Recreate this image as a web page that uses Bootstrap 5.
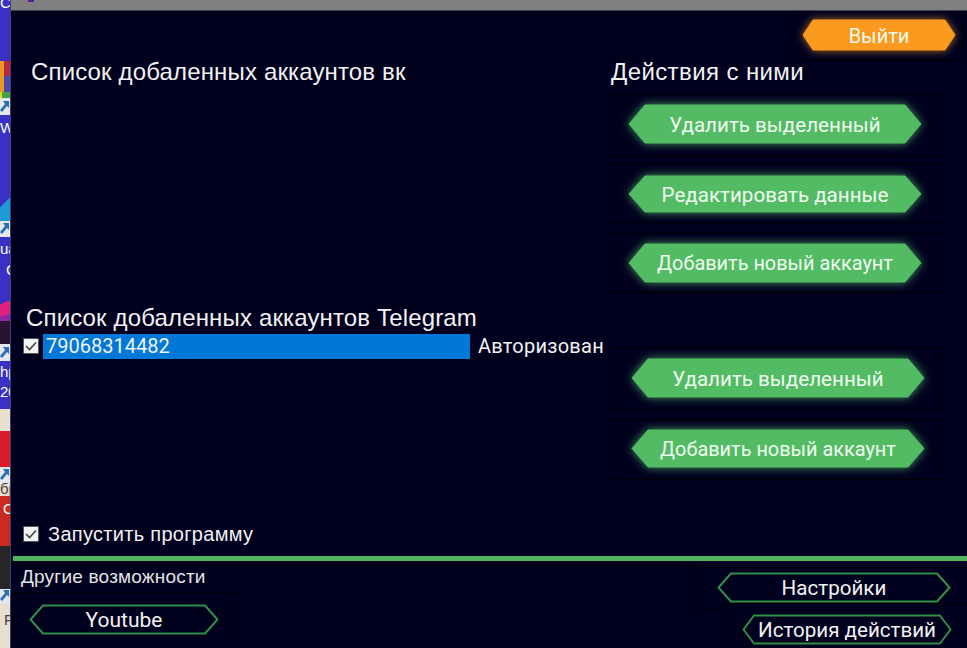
<!DOCTYPE html>
<html lang="ru">
<head>
<meta charset="utf-8">
<title>Аккаунты</title>
<link href="https://cdn.jsdelivr.net/npm/bootstrap@5.3.0/dist/css/bootstrap.min.css" rel="stylesheet">
<style>
html,body{height:648px;overflow:hidden;background:#00001e}
body{font-family:"Liberation Sans",sans-serif;color:#f2f2f2}
.desk{width:967px;height:648px}
.wall{width:11px;flex:none;overflow:hidden;font:15px/16px "Liberation Sans",sans-serif;color:#fff;border-right:1px solid #3b3d6d}
.sg{flex:none;overflow:hidden;white-space:nowrap;background:#3a30c4}
.sg span{display:block}
.sg svg{display:block}
.s-arrow{background:#e4e8ee}
.s-red{background:linear-gradient(90deg,#e89a20 0 4px,#b82840 4px)}
.s-blu{background:linear-gradient(90deg,#e89a20 0 4px,#4a48a8 4px)}
.s-grn{background:linear-gradient(90deg,#e8d820 0 2px,#3fa34d 2px)}
.s-cy{background:linear-gradient(135deg,#3a30c4 0 50%,#1f9ad6 50%)}
.s-pk{background:linear-gradient(160deg,#3a30c4 0 20%,#e0207c 20% 70%,#8a2aa0 70%)}
.s-dk{background:#2a1230}
.s-bei{background:#e8dfcf;color:#444}
.s-rd{background:#d81c2c}
.s-rd2{background:#cc2a20}
.s-blk{background:#262626}
.win{min-width:0;background:#00001e}
.tbar{height:11px;background:#808080;border-bottom:1px solid #404048;padding-left:17px}
.tico{display:block;width:6px;height:2px;background:#5a1a90}
.pane{height:637px}
.lcol{width:600px;flex:none}
.rcol{width:356px;flex:none}
.lbl{font-size:24px;line-height:26px;white-space:nowrap;letter-spacing:.15px}
.h1a{margin:48px 0 0 20px}
.h1b{margin:220px 0 0 15px}
.acc{margin:2px 0 0 12px;height:26px}
.cb{width:16px;height:16px;flex:none;background:#f3f3f3;border:1px solid #555;display:flex;align-items:center;justify-content:center}
.sel{margin-left:4px;width:427px;height:25px;background:#0078d7;font-family:Roboto,sans-serif;font-size:20px;line-height:25px;padding-left:3px}
.st{margin-left:8px;font-size:20px;letter-spacing:.25px;white-space:nowrap;font-family:Roboto,sans-serif}
.run{margin:163px 0 0 12px;height:24px;font-size:20px;letter-spacing:.3px;white-space:nowrap}
.run .cb{margin-right:9px}
.hrline{height:5px;background:#4db45f;margin:10px 0 0 2px;flex:none}
.more{font-size:19px;line-height:20px;letter-spacing:.2px;margin:6px 0 0 10px;color:#e4e4e4;white-space:nowrap}
.fr{border:1px solid #000;display:block;position:relative}
.hex{position:relative;display:flex;align-items:center;justify-content:center;color:#f0fbf0;font-family:Roboto,sans-serif;white-space:nowrap;padding:0;border:0;border-radius:0;background:none}
.hex:hover,.hex:active{color:#f0fbf0;background:none;border:0}
.hex svg{position:absolute;left:0;top:0;overflow:visible}
.hex span{position:relative;top:1px}
.gr svg{filter:drop-shadow(0 0 5px rgba(100,220,120,.7))}
.or svg{filter:drop-shadow(0 0 4px rgba(250,160,40,.7))}
.fill{font-size:20.6px}
.fill2{font-size:19.9px}
.line{font-size:20.6px;color:#f2f2f2}
.exitrow{margin:0 3px 0 0;height:49px;justify-content:flex-end}
.exitfr{width:171px;height:49px;border-top:0;padding:8px 0 0 8px}
.h2{margin:-1px 0 0 0;letter-spacing:.4px}
.fa{width:329px;padding-left:16px}
.fa1{height:62px;margin-top:9px;padding-top:9px}
.fa2{height:59px;margin-top:8px;padding-top:10px}
.fa3{height:60px;margin-top:10px;padding-top:9px}
.fb1{width:330px;height:63px;margin:54px 0 0 2px;padding:10px 0 0 17px}
.fb2{width:330px;height:61px;margin:9px 0 0 2px;padding:9px 0 0 17px}
.foot{height:0;flex:1 1 auto}
.ft1{width:240px}
.yfr{width:222px;height:46px;margin:5px 0 0 1px;padding:11px 0 0 16px;border-bottom:0}
.ftr{width:270px;margin-left:auto}
.nfr{width:270px;height:44px;padding:4px 0 0 19px;margin-top:6px;border-right:0}
.hfr{width:239px;height:44px;margin:-8px 0 0 31px;padding:10px 0 0 13px;background:#00001e;border-right:0;border-bottom:0}
</style>
</head>
<body>
<div class="desk d-flex">
  <div class="wall d-flex flex-column" aria-hidden="true">
    <div class="sg" style="height:61px"><span style="margin-top:-5px">CC</span></div>
    <div class="sg s-red" style="height:15px"></div>
    <div class="sg s-blu" style="height:16px"></div>
    <div class="sg s-grn" style="height:6px"></div>
    <div class="sg s-arrow" style="height:17px"><svg width="10" height="17"><path d="M3 3H9V10L7 8L2 14L0 12L5 6Z" fill="#2a6fb8"/></svg></div>
    <div class="sg" style="height:69px"><span style="padding-top:5px">W</span></div>
    <div class="sg s-cy" style="height:37px"></div>
    <div class="sg s-arrow" style="height:16px"><svg width="10" height="16"><path d="M3 2H9V9L7 7L2 13L0 11L5 5Z" fill="#2a6fb8"/></svg></div>
    <div class="sg" style="height:62px"><span style="padding-top:4px">ua</span><span style="padding:5px 0 0 6px">C</span></div>
    <div class="sg s-pk" style="height:22px"></div>
    <div class="sg s-dk" style="height:23px"></div>
    <div class="sg s-arrow" style="height:17px"><svg width="10" height="17"><path d="M3 3H9V10L7 8L2 14L0 12L5 6Z" fill="#2a6fb8"/></svg></div>
    <div class="sg" style="height:48px"><span style="padding-top:3px">hp</span><span style="padding-top:4px">20</span></div>
    <div class="sg s-bei" style="height:22px"></div>
    <div class="sg s-rd" style="height:36px"></div>
    <div class="sg s-arrow" style="height:16px"><svg width="10" height="16"><path d="M3 2H9V9L7 7L2 13L0 11L5 5Z" fill="#2a6fb8"/></svg></div>
    <div class="sg s-bei" style="height:13px"><span style="margin-top:-2px">бр</span></div>
    <div class="sg s-rd2" style="height:50px"><span style="padding:5px 0 0 3px">С</span></div>
    <div class="sg s-blk" style="height:43px"></div>
    <div class="sg s-arrow" style="height:15px"><svg width="10" height="15"><path d="M3 1H9V8L7 6L2 12L0 10L5 4Z" fill="#2a6fb8"/></svg></div>
    <div class="sg s-bei flex-grow-1"><span style="padding:8px 0 0 4px">F</span></div>
  </div>
  <div class="win flex-grow-1 d-flex flex-column">
    <div class="tbar"><i class="tico"></i></div>
    <div class="pane d-flex flex-column">
      <div class="d-flex">
        <div class="lcol d-flex flex-column">
          <div class="lbl h1a">Список добаленных аккаунтов вк</div>
          <div class="lbl h1b">Список добаленных аккаунтов Telegram</div>
          <div class="acc d-flex align-items-center">
            <span class="cb"><svg width="12" height="10" viewBox="0 0 12 10"><path d="M1 5l3.500 3.500L11 1.500" fill="none" stroke="#444" stroke-width="1.600"/></svg></span>
            <div class="sel">79068314482</div>
            <div class="st">Авторизован</div>
          </div>
          <div class="run d-flex align-items-center">
            <span class="cb"><svg width="12" height="10" viewBox="0 0 12 10"><path d="M1 5l3.500 3.500L11 1.500" fill="none" stroke="#444" stroke-width="1.600"/></svg></span>
            Запустить программу
          </div>
        </div>
        <div class="rcol d-flex flex-column">
          <div class="d-flex exitrow">
            <div class="fr exitfr">
              <button class="btn hex or" style="width:154px;height:32px;font-size:20px"><svg width="154" height="32"><path d="M11 1H143L153 16L143 31H11L1 16Z" fill="#fa9a1e" stroke="#fa9a1e" stroke-linejoin="round"/></svg><span>Выйти</span></button>
            </div>
          </div>
          <div class="lbl h2">Действия с ними</div>
          <div class="fr fa fa1">
            <button class="btn hex gr fill" style="width:294px;height:40px"><svg width="294" height="40"><path d="M17 1H277L293 20L277 39H17L1 20Z" fill="#52bb64" stroke="#52bb64" stroke-linejoin="round"/></svg><span>Удалить выделенный</span></button>
          </div>
          <div class="fr fa fa2">
            <button class="btn hex gr fill" style="width:294px;height:38px"><svg width="294" height="38"><path d="M17 1H277L293 19L277 37H17L1 19Z" fill="#52bb64" stroke="#52bb64" stroke-linejoin="round"/></svg><span>Редактировать данные</span></button>
          </div>
          <div class="fr fa fa3">
            <button class="btn hex gr fill2" style="width:294px;height:40px"><svg width="294" height="40"><path d="M17 1H277L293 20L277 39H17L1 20Z" fill="#52bb64" stroke="#52bb64" stroke-linejoin="round"/></svg><span>Добавить новый аккаунт</span></button>
          </div>
          <div class="fr fb1">
            <button class="btn hex gr fill" style="width:294px;height:40px"><svg width="294" height="40"><path d="M17 1H277L293 20L277 39H17L1 20Z" fill="#52bb64" stroke="#52bb64" stroke-linejoin="round"/></svg><span>Удалить выделенный</span></button>
          </div>
          <div class="fr fb2">
            <button class="btn hex gr fill2" style="width:294px;height:39px"><svg width="294" height="39"><path d="M17 1H277L293 19.500L277 38H17L1 19.500Z" fill="#52bb64" stroke="#52bb64" stroke-linejoin="round"/></svg><span>Добавить новый аккаунт</span></button>
          </div>
        </div>
      </div>
      <div class="hrline"></div>
      <div class="d-flex foot">
        <div class="ft1">
          <div class="more">Другие возможности</div>
          <div class="fr yfr">
            <button class="btn hex line" style="width:190px;height:31px;font-size:21px"><svg width="190" height="31"><path d="M14 1.500H176L188.500 15.500L176 29.500H14L1.500 15.500Z" fill="none" stroke="#2f8f45" stroke-width="2" stroke-linejoin="round"/></svg><span>Youtube</span></button>
          </div>
        </div>
        <div class="ftr">
          <div class="fr nfr">
            <button class="btn hex line" style="width:234px;height:31px"><svg width="234" height="31"><path d="M14 1.500H220L232.500 15.500L220 29.500H14L1.500 15.500Z" fill="none" stroke="#2f8f45" stroke-width="2" stroke-linejoin="round"/></svg><span>Настройки</span></button>
          </div>
          <div class="fr hfr">
            <button class="btn hex line" style="width:210px;height:31px"><svg width="210" height="31"><path d="M12 1.500H198L208.500 15.500L198 29.500H12L1.500 15.500Z" fill="none" stroke="#2f8f45" stroke-width="2" stroke-linejoin="round"/></svg><span>История действий</span></button>
          </div>
        </div>
      </div>
    </div>
  </div>
</div>
<script src="https://cdn.jsdelivr.net/npm/bootstrap@5.3.0/dist/js/bootstrap.bundle.min.js"></script>
</body>
</html>
